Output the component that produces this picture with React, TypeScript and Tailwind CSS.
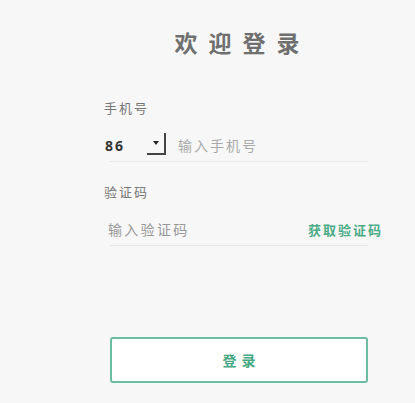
import React from "react";

export default function App() {
  return (
    <div
      className="w-[415px] h-[403px] bg-[#f7f7f7] overflow-hidden"
      style={{ fontFamily: '"Noto Sans CJK SC", "Noto Sans", sans-serif' }}
    >
      <div className="ml-[104px] w-[278px] pt-[26px]">
        <div className="flex justify-center pr-[12px]">
          <h1 className="text-[23px] leading-[32px] font-bold tracking-[11px] text-[#6f6f6f] pl-[11px]">
            欢迎登录
          </h1>
        </div>

        <div className="mt-[42px] text-[13px] leading-[16px] tracking-[2px] text-[#777]">手机号</div>
        <div className="mt-[14px] ml-[6px] w-[258px] h-[32px] flex items-center border-b border-[#e6e6e6]">
          <span
            className="text-[14px] font-bold text-[#333] tracking-[2px] ml-[-5px] w-[42px]"
            style={{ fontFamily: '"Open Sans", "Noto Sans CJK SC", sans-serif' }}
          >
            86
          </span>
          <div className="relative w-[19px] h-[22px] mt-[-4px] border-r-2 border-b-2 border-[#444] flex items-center justify-center">
            <span className="block w-0 h-0 border-l-[3px] border-r-[3px] border-t-[4px] border-l-transparent border-r-transparent border-t-[#222]" />
          </div>
          <span className="ml-[12px] text-[14px] tracking-[2px] text-[#aaa]">输入手机号</span>
        </div>

        <div className="mt-[22px] text-[13px] leading-[16px] tracking-[2px] text-[#777]">验证码</div>
        <div className="mt-[14px] ml-[6px] w-[258px] h-[32px] flex items-center justify-between border-b border-[#e6e6e6]">
          <span className="ml-[-2px] text-[14px] tracking-[2.3px] text-[#999]">输入验证码</span>
          <span className="mr-[-15px] text-[13px] font-bold tracking-[2px] text-[#4aab86]">获取验证码</span>
        </div>

        <button className="mt-[91px] ml-[6px] w-[258px] h-[46px] bg-white border-2 border-[#6cbca0] rounded-[3px] flex items-center justify-center text-[14px] font-bold text-[#45a783] tracking-[5px] pl-[5px]">
          登录
        </button>
      </div>
    </div>
  );
}
